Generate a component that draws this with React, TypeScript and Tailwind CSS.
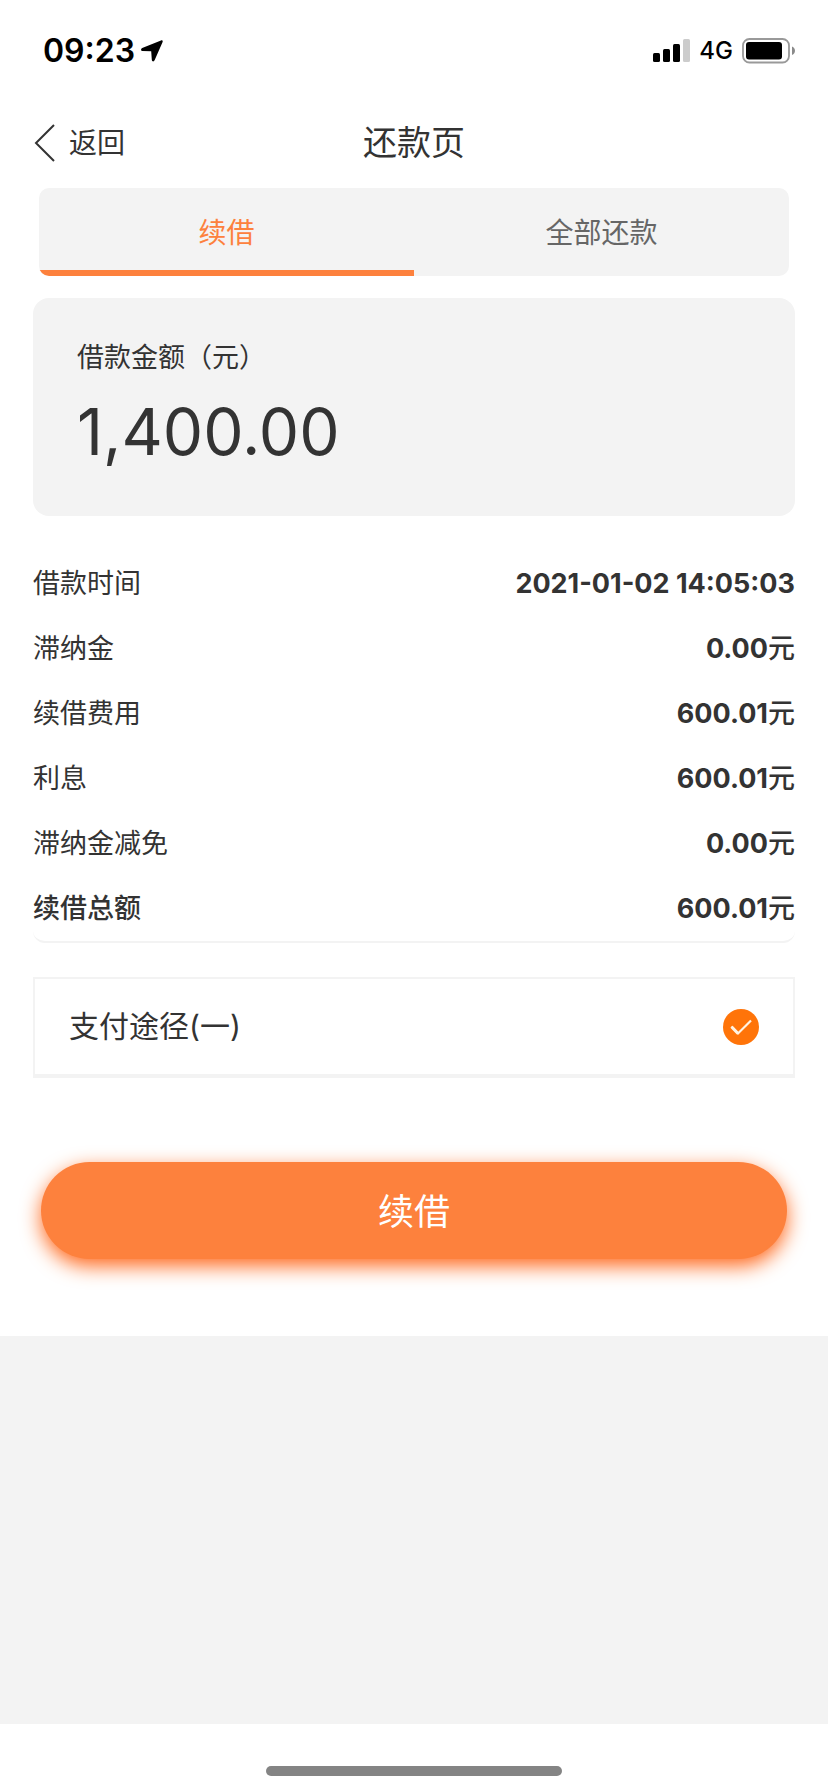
import React, { useState } from 'react';

interface DetailRow {
    label: string;
    value: string;
    unit?: string;
    strong?: boolean;
}

const details: DetailRow[] = [
    { label: '借款时间', value: '2021-01-02 14:05:03' },
    { label: '滞纳金', value: '0.00', unit: '元' },
    { label: '续借费用', value: '600.01', unit: '元' },
    { label: '利息', value: '600.01', unit: '元' },
    { label: '滞纳金减免', value: '0.00', unit: '元' },
    { label: '续借总额', value: '600.01', unit: '元', strong: true },
];

const tabs = ['续借', '全部还款'];

const StatusBar: React.FC = () => (
    <div className="flex items-center justify-between pt-[31px] pl-[43px] pr-8 text-black">
        <div className="flex items-center gap-[6px]">
            <span className="text-[32px] leading-10 font-semibold">09:23</span>
            <svg width="22" height="22" viewBox="0 0 22 22" fill="currentColor" aria-hidden="true">
                <path d="M20 .4 1.200 8.100C-.5 8.900-.3 10.800 1.500 10.900L10.200 11.200 10.800 19.800C11 21.700 12.900 21.900 13.600 20.300L21.600 2C22.100.8 21.200-.1 20 .4Z" />
            </svg>
        </div>
        <div className="flex items-center gap-[9px]">
            <svg width="37" height="24" viewBox="0 0 37 24" fill="currentColor" aria-hidden="true">
                <rect x="0" y="14" width="7" height="9" rx="1.500" />
                <rect x="10" y="10" width="7" height="13" rx="1.500" />
                <rect x="20" y="5" width="7" height="18" rx="1.500" />
                <rect x="30" y="0" width="7" height="23" rx="1.500" fill="#cccccc" />
            </svg>
            <span className="text-2xl font-medium">4G</span>
            <svg width="54" height="26" viewBox="0 0 54 26" aria-hidden="true">
                <rect x="1" y="1" width="46" height="23.500" rx="6.500" fill="none" stroke="#999999" strokeWidth="1.800" />
                <rect x="4" y="4" width="36" height="17.500" rx="3" fill="#000000" />
                <path d="M50 8.500C54 10 54 15.500 50 17Z" fill="#8a8a8a" />
            </svg>
        </div>
    </div>
);

const App: React.FC = () => {
    const [activeTab, setActiveTab] = useState(0);
    const [payMethod, setPayMethod] = useState('one');

    return (
        <div className="flex min-h-screen flex-col bg-[#f3f3f3] font-['Inter','Noto_Sans_CJK_SC',sans-serif] text-[#333333]">
            <div className="bg-white pb-[77px]">
                <StatusBar />

                <header className="mt-9 mb-[11px] grid h-[70px] grid-cols-[1fr_auto_1fr] items-center px-[33px]">
                    <button className="flex items-center gap-[14px] pt-[2px] text-[28px]">
                        <svg width="22" height="38" viewBox="0 0 22 38" fill="none" stroke="currentColor" strokeWidth="2" aria-hidden="true">
                            <path d="M21 1 3 19 21 37" />
                        </svg>
                        返回
                    </button>
                    <h1 className="text-[34px]">还款页</h1>
                </header>

                <div role="tablist" className="mx-[39px] flex overflow-hidden rounded-[10px] bg-[#f3f3f3]">
                    {tabs.map((tab, i) => (
                        <button
                            key={tab}
                            role="tab"
                            aria-selected={activeTab === i}
                            onClick={() => setActiveTab(i)}
                            className={`h-[88px] flex-1 border-b-[6px] pt-2 text-[28px] ${activeTab === i ? 'border-[#fd813d] text-[#fd813d]' : 'border-transparent text-[#666666]'}`}
                        >
                            {tab}
                        </button>
                    ))}
                </div>

                <section className="mx-[33px] mt-[22px] rounded-2xl bg-[#f3f3f3] px-11 pt-10 pb-10">
                    <p className="text-[27px] leading-10">借款金额（元）</p>
                    <p className="mt-[10px] text-[64px] leading-[88px]">1,400.00</p>
                </section>

                <dl className="mx-[33px] mt-[35px] rounded-xl border-b-2 border-[#f3f3f3]">
                    {details.map((row) => (
                        <div key={row.label} className="flex h-[65px] items-center justify-between pt-[2px] text-[27px]">
                            <dt className={row.strong ? 'font-medium' : ''}>{row.label}</dt>
                            <dd className="font-bold">
                                {row.value}
                                {row.unit && <span className="font-medium">{row.unit}</span>}
                            </dd>
                        </div>
                    ))}
                </dl>

                <label className="mx-[33px] mt-[34px] flex h-[101px] items-center justify-between border-2 border-b-4 border-[#f3f3f3] px-[34px] text-[30px]">
                    支付途径(一)
                    <span className="grid size-9 place-items-center">
                        <input
                            type="radio"
                            name="pay"
                            checked={payMethod === 'one'}
                            onChange={() => setPayMethod('one')}
                            className="col-start-1 row-start-1 size-9 appearance-none rounded-full bg-[#ff7409]"
                        />
                        <svg className="pointer-events-none col-start-1 row-start-1" width="36" height="36" viewBox="0 0 36 36" fill="none" aria-hidden="true">
                            <path d="M8.500 17.500 15 24.500 28 11.500" stroke="#fff3e2" strokeWidth="2.200" />
                            <path d="M8.500 17.800 15 24.500" stroke="#fff3e2" strokeWidth="3" />
                        </svg>
                    </span>
                </label>

                <div className="px-[41px] pt-[84px]">
                    <button className="h-[97px] w-full rounded-full bg-[#fd813d] pt-[2px] text-4xl text-white shadow-[0_7px_20px_#ff6a1f]">
                        续借
                    </button>
                </div>
            </div>

            <footer className="mt-auto flex h-[68px] items-center justify-center bg-white pt-[26px]">
                <div className="h-[10px] w-[296px] rounded-full bg-[#848484]" />
            </footer>
        </div>
    );
};

export default App;
